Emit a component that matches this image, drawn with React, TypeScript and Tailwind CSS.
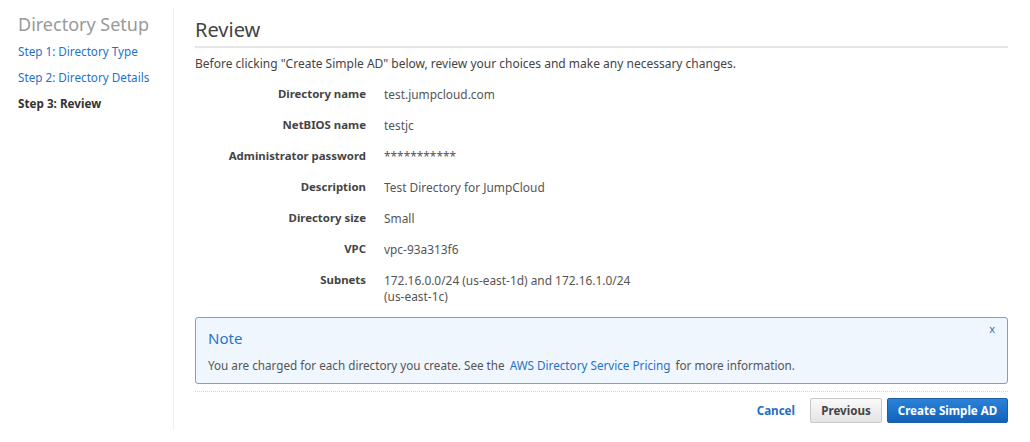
import React from "react";

const rows: { label: string; value: React.ReactNode }[] = [
  { label: "Directory name", value: "test.jumpcloud.com" },
  { label: "NetBIOS name", value: "testjc" },
  { label: "Administrator password", value: "***********" },
  { label: "Description", value: "Test Directory for JumpCloud" },
  { label: "Directory size", value: "Small" },
  { label: "VPC", value: "vpc-93a313f6" },
  {
    label: "Subnets",
    value: (
      <>
        172.16.0.0/24 (us-east-1d) and 172.16.1.0/24
        <br />
        (us-east-1c)
      </>
    ),
  },
];

const App = () => {
  return (
    <div
      className="w-[1030px] h-[442px] bg-white pt-2 flex text-[12px] text-[#444]"
      style={{ fontFamily: '"Noto Sans", "Open Sans", sans-serif' }}
    >
      {/* Sidebar */}
      <div className="w-[174px] h-[422px] shrink-0 pl-[18px] pt-1 border-r border-[#f0f0f0]">
        <div className="text-[18px] leading-[24px] text-[#999]">Directory Setup</div>
        <div className="mt-[7px] flex flex-col gap-[10px] leading-[16px] text-[11.7px]">
          <a className="text-[#1f72c8] cursor-pointer">Step 1: Directory Type</a>
          <a className="text-[#1f72c8] cursor-pointer">Step 2: Directory Details</a>
          <span className="font-bold text-[#333]">Step 3: Review</span>
        </div>
      </div>

      {/* Main */}
      <div className="flex-1 pl-[21px] pr-[22px] pt-2">
        <h2 className="text-[20px] leading-[28px] text-[#444] pb-[2px] border-b-2 border-[#e6e6e6]">
          Review
        </h2>
        <p className="mt-2 leading-[16px] text-[#444]">
          Before clicking "Create Simple AD" below, review your choices and make any necessary changes.
        </p>

        <div className="mt-[14px] grid grid-cols-[171px_1fr] gap-x-[18px] gap-y-[15px] leading-[16px]">
          {rows.map((r) => (
            <React.Fragment key={r.label}>
              <div className="text-right font-bold text-[11.4px] text-[#444]">{r.label}</div>
              <div className="text-[#555] text-[11.9px]">{r.value}</div>
            </React.Fragment>
          ))}
        </div>

        {/* Note */}
        <div className="relative mt-[13px] h-[67px] rounded-[3px] border border-[#6ca4e2] bg-[#eff6fd] px-[12px] pt-[9px]">
          <div className="text-[15px] leading-[22px] text-[#2a74c6]">Note</div>
          <div className="mt-[8px] leading-[16px] text-[11.7px] text-[#555]">
            You are charged for each directory you create. See the{" "}
            <a className="ml-[2px] mr-[2px] text-[#1f72c8] cursor-pointer">AWS Directory Service Pricing</a> for more
            information.
          </div>
          <span className="absolute right-[12px] top-[3px] text-[11px] text-[#2a74c6] cursor-pointer">x</span>
        </div>

        <div className="mt-[7px] border-t border-dotted border-[#d5d5d5]" />

        {/* Buttons */}
        <div className="mt-[6px] flex items-center justify-end text-[11.6px]">
          <a className="font-bold text-[#1f6fc5] cursor-pointer mr-[15px]">Cancel</a>
          <button className="h-[25px] w-[72px] rounded-[2px] border border-[#c8c8c8] bg-gradient-to-b from-[#fafafa] to-[#e4e4e4] font-bold text-[#444]">
            Previous
          </button>
          <button className="ml-[5px] h-[25px] w-[121px] rounded-[2px] border border-[#1a5fa8] bg-gradient-to-b from-[#2b82d8] to-[#1162bb] font-bold text-white">
            Create Simple AD
          </button>
        </div>
      </div>
    </div>
  );
};

export default App;
